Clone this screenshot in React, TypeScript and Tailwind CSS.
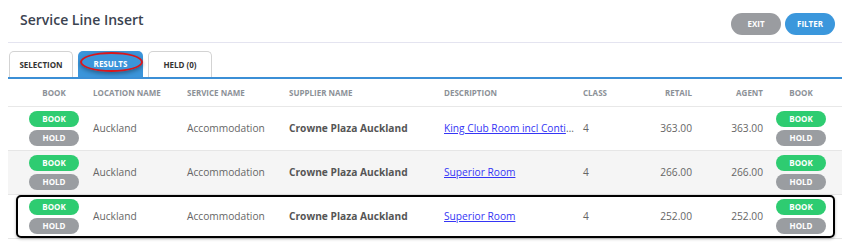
export default function App() {
  const rows = [
    { loc: "Auckland", svc: "Accommodation", sup: "Crowne Plaza Auckland", desc: "King Club Room incl Continental Breakfast", cls: "4", retail: "363.00", agent: "363.00", bg: "bg-white", marked: false },
    { loc: "Auckland", svc: "Accommodation", sup: "Crowne Plaza Auckland", desc: "Superior Room", cls: "4", retail: "266.00", agent: "266.00", bg: "bg-[#f5f5f5]", marked: false },
    { loc: "Auckland", svc: "Accommodation", sup: "Crowne Plaza Auckland", desc: "Superior Room", cls: "4", retail: "252.00", agent: "252.00", bg: "bg-white", marked: true },
  ]

  const cols = "grid grid-cols-[85px_94px_102px_155px_139px_57px_52px_71px_1fr]"

  const BookHold = ({ offset }: { offset: string }) => (
    <div className={`flex flex-col gap-[3px] ${offset}`}>
      <button className="w-[50px] h-[16px] rounded-full bg-[#2ecc71] text-white text-[8px] font-bold leading-none">BOOK</button>
      <button className="w-[50px] h-[16px] rounded-full bg-[#9a9da1] text-white text-[8px] font-bold leading-none">HOLD</button>
    </div>
  )

  return (
    <main className="w-[853px] h-[248px] bg-white pl-2 pr-[11px] overflow-hidden" style={{ fontFamily: '"Open Sans", "Noto Sans", sans-serif' }}>
      {/* Header */}
      <div className="flex justify-between h-[43px] border-b border-[#e4e4f0]">
        <h1 className="pl-3 pt-[10px] text-[14px] leading-[20px] font-semibold text-[#3b4350]">Service Line Insert</h1>
        <div className="flex gap-[4px] pt-[13px] pr-[7px]">
          <button className="w-[50px] h-[22px] rounded-full bg-[#9a9ca0] text-white text-[8px] font-bold">EXIT</button>
          <button className="w-[50px] h-[22px] rounded-full bg-[#3b97dc] text-white text-[8px] font-bold">FILTER</button>
        </div>
      </div>

      {/* Tabs */}
      <div className="flex gap-[5px] pl-px mt-[8px] border-b-2 border-[#3b8fd6]">
        <div className="w-[64px] h-[26px] flex items-center justify-center border border-b-0 border-[#d3d3d3] rounded-t-[5px] text-[8px] font-bold text-[#333]">SELECTION</div>
        <div className="relative w-[65px] h-[26px] flex items-center justify-center bg-[#3b95da] rounded-t-[5px] text-[8px] font-bold text-white">
          RESULTS
          <div className="absolute left-[2px] top-[1px] w-[63px] h-[20px] rounded-[50%] border-2 border-[#d8161b] shadow-[0_2px_4px_rgba(0,0,0,0.35)]" />
        </div>
        <div className="w-[64px] h-[26px] flex items-center justify-center border border-b-0 border-[#d3d3d3] rounded-t-[5px] text-[8px] font-bold text-[#333]">HELD (0)</div>
      </div>

      {/* Table header */}
      <div className={`${cols} h-[28px] items-center border-b border-[#e8e8e8] text-[8px] font-bold text-[#8c9197] uppercase`}>
        <div className="ml-[21px] w-[50px] text-center">Book</div>
        <div>Location Name</div>
        <div>Service Name</div>
        <div>Supplier Name</div>
        <div>Description</div>
        <div>Class</div>
        <div className="text-right">Retail</div>
        <div className="text-right">Agent</div>
        <div className="ml-[13px] w-[50px] text-center">Book</div>
      </div>

      {/* Rows */}
      {rows.map((r, i) => (
        <div key={i} className={`relative ${cols} h-[44px] items-center border-b border-[#e6e6e6] ${r.bg} text-[10.2px] text-[#666]`}>
          <BookHold offset="ml-[21px]" />
          <div>{r.loc}</div>
          <div>{r.svc}</div>
          <div className="font-bold text-[#555]">{r.sup}</div>
          <div className="pr-2 truncate">
            <a href="#" className="text-[#3535f5] underline">{r.desc}</a>
          </div>
          <div>{r.cls}</div>
          <div className="text-right">{r.retail}</div>
          <div className="text-right">{r.agent}</div>
          <BookHold offset="ml-[13px]" />
          {r.marked && (
            <div className="absolute top-0 bottom-0 left-[8px] right-[7px] border-2 border-black rounded-[5px] shadow-[0_1px_3px_rgba(0,0,0,0.3)] pointer-events-none" />
          )}
        </div>
      ))}
    </main>
  )
}
